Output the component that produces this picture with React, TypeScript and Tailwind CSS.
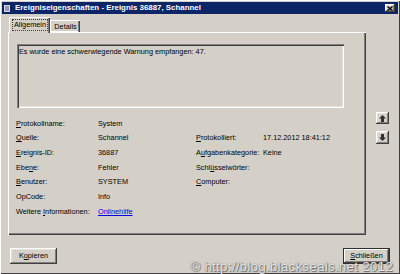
import React from "react";

const btn3d =
  "shadow-[inset_-1px_-1px_#404040,inset_1px_1px_#ffffff,inset_-2px_-2px_#808080,inset_2px_2px_#e4e2dc]";

function Row({
  label,
  value,
  rlabel,
  rvalue,
}: {
  label: React.ReactNode;
  value?: React.ReactNode;
  rlabel?: React.ReactNode;
  rvalue?: React.ReactNode;
}) {
  return (
    <div className="flex h-[14.7px] items-center">
      <div className="w-[82px] shrink-0">{label}</div>
      <div className="w-[98px] shrink-0">{value}</div>
      <div className="w-[67px] shrink-0">{rlabel}</div>
      <div>{rvalue}</div>
    </div>
  );
}

const U = ({ children }: { children: React.ReactNode }) => (
  <span className="underline underline-offset-1">{children}</span>
);

function Arrow({ down }: { down?: boolean }) {
  return (
    <svg width="7" height="7" viewBox="0 0 7 7" className={down ? "rotate-180" : ""}>
      <polygon points="3.5,0 7,3.5 5,3.5 5,7 2,7 2,3.5 0,3.5" fill="#303030" />
    </svg>
  );
}

export default function App() {
  return (
    <div className="relative flex h-[274px] w-[400px] flex-col overflow-hidden bg-[#d4d0c8] font-['Liberation_Sans',Arial,sans-serif] text-[7.3px] leading-none text-black shadow-[inset_1px_1px_#ffffff,inset_-1px_-1px_#404040]">
      {/* Title bar */}
      <div className="mx-[2px] mt-[2px] flex h-[12px] items-center bg-[#0c2566] pl-[2px] pr-[3px]">
        <div className="h-[7px] w-[6px] border border-[#d8d8d8] bg-[#8c9bb8]" />
        <span className="ml-[5px] text-[7.9px] font-bold text-white">
          Ereigniseigenschaften - Ereignis 36887, Schannel
        </span>
        <div
          className={`ml-auto flex h-[8px] w-[10px] items-center justify-center bg-[#d4d0c8] ${btn3d}`}
        >
          <svg width="6" height="5" viewBox="0 0 6 5">
            <path d="M0.5 0.5 L5.5 4.5 M5.5 0.5 L0.5 4.5" stroke="#000" strokeWidth="1.3" />
          </svg>
        </div>
      </div>

      {/* Body */}
      <div className="flex pl-[8px] pt-[3px]">
        <div className="flex w-[358px] flex-col">
          {/* Tabs */}
          <div className="relative z-10 flex h-[15px] items-end">
            <div className="ml-[1px] flex h-[16px] w-[41px] items-center justify-center self-start border-l border-t border-white bg-[#d4d0c8] pb-[1px] shadow-[inset_-1px_0_#404040,inset_-2px_0_#808080]">
              <span className="border border-dotted border-[#404040] px-[1px] py-[1px]">Allgemein</span>
            </div>
            <div className="flex h-[12px] w-[30px] items-center justify-center border-l border-t border-white shadow-[inset_-1px_0_#404040,inset_-2px_0_#808080,inset_0_-1px_#ffffff]">
              Details
            </div>
          </div>
          {/* Panel */}
          <div className="h-[203px] border-l border-t border-white shadow-[inset_-1px_-1px_#404040,inset_-2px_-2px_#808080]">
            <div className="ml-[8px] mt-[11px] h-[64px] w-[327px] bg-[#d4d0c8] px-[2px] pt-[4px] shadow-[inset_1px_1px_#808080,inset_2px_2px_#404040,inset_-1px_-1px_#ffffff,inset_-2px_-2px_#e4e2dc]">
              Es wurde eine schwerwiegende Warnung empfangen: 47.
            </div>
            <div className="mt-[8px] pl-[7px]">
              <Row label={<><U>P</U>rotokollname:</>} value="System" />
              <Row
                label={<><U>Q</U>uelle:</>}
                value="Schannel"
                rlabel={<><U>P</U>rotokolliert:</>}
                rvalue="17.12.2012 18:41:12"
              />
              <Row
                label={<><U>E</U>reignis-ID:</>}
                value="36887"
                rlabel={<>A<U>u</U>fgabenkategorie:</>}
                rvalue="Keine"
              />
              <Row
                label={<>Ebe<U>n</U>e:</>}
                value="Fehler"
                rlabel={<>Schl<U>ü</U>sselwörter:</>}
              />
              <Row
                label={<><U>B</U>enutzer:</>}
                value="SYSTEM"
                rlabel={<><U>C</U>omputer:</>}
              />
              <Row label="OpCode:" value="Info" />
              <Row
                label={<>Weitere <U>I</U>nformationen:</>}
                value={<span className="text-[#0000e0] underline underline-offset-1">Onlinehilfe</span>}
              />
            </div>
          </div>
        </div>
        {/* Arrow buttons */}
        <div className="flex flex-col gap-[7px] pl-[10px] pt-[95px]">
          <div className={`flex h-[12px] w-[13px] items-center justify-center ${btn3d}`}>
            <Arrow />
          </div>
          <div className={`flex h-[13px] w-[13px] items-center justify-center ${btn3d}`}>
            <Arrow down />
          </div>
        </div>
      </div>

      {/* Bottom buttons */}
      <div className="mt-[13px] flex h-[16px] justify-between px-[10px]">
        <div className={`flex w-[47px] items-center justify-center ${btn3d}`}>
          K<U>o</U>pieren
        </div>
        <div className="flex w-[47px] items-center justify-center border border-[#303030] shadow-[inset_-1px_-1px_#404040,inset_1px_1px_#ffffff,inset_-2px_-2px_#808080]">
          <U>S</U>chließen
        </div>
      </div>

      {/* Watermark */}
      <div className="absolute bottom-[1px] right-[7px] text-[13.5px] leading-none tracking-[0.2px] text-white/85 [text-shadow:0_0_1px_#555,1px_1px_1px_#666]">
        © http://blog.blackseals.net 2012
      </div>
    </div>
  );
}
